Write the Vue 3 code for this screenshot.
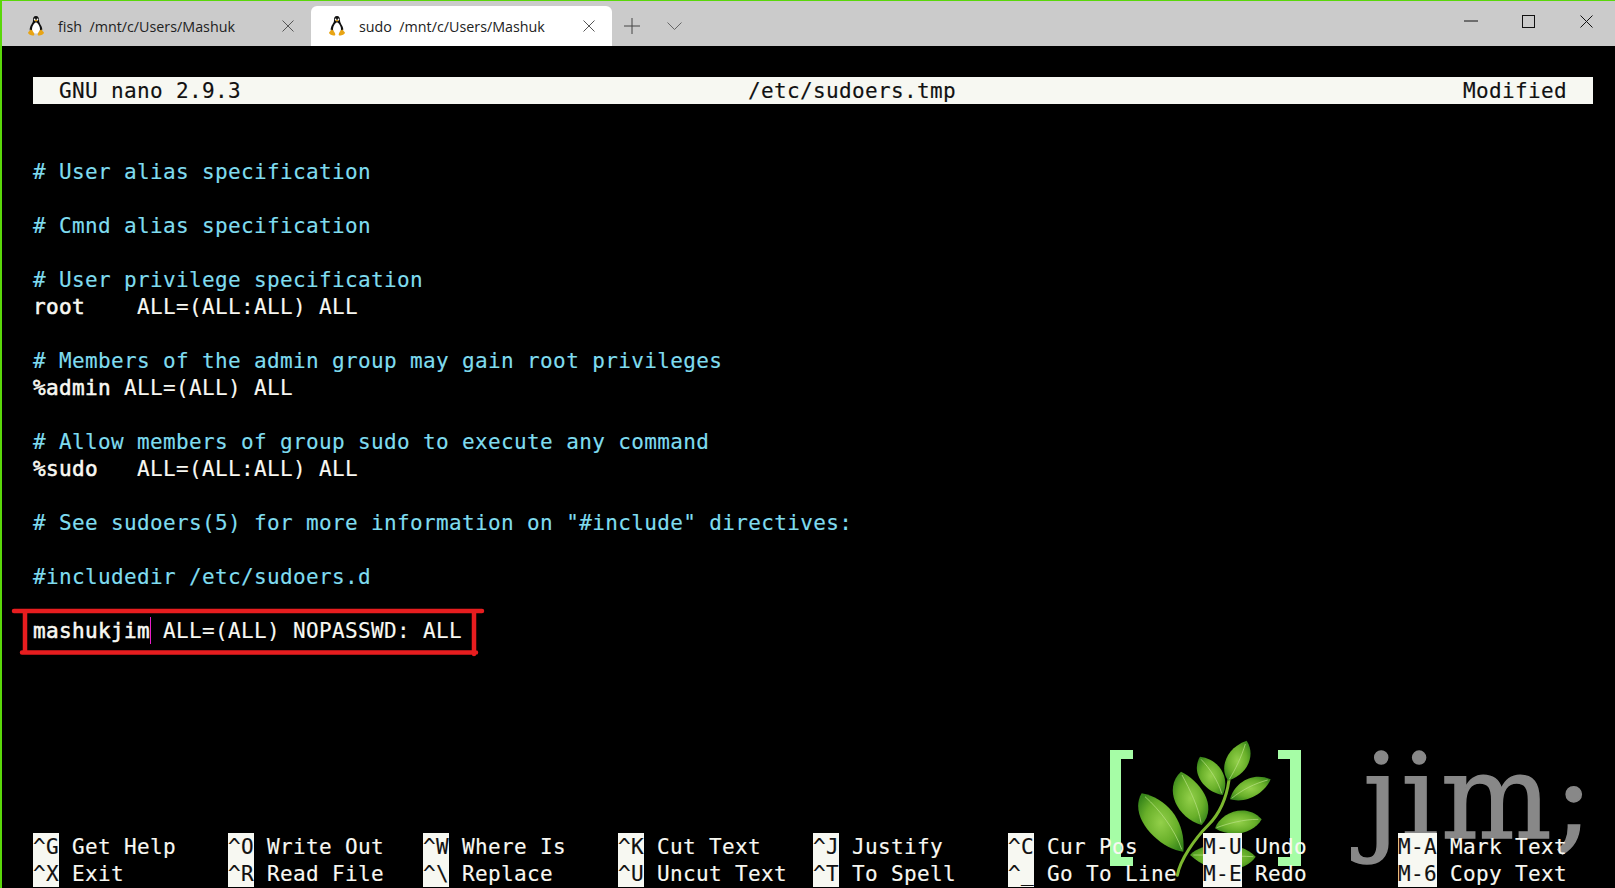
<script setup>
const tabs = [
  { title: 'fish  /mnt/c/Users/Mashuk', active: false },
  { title: 'sudo  /mnt/c/Users/Mashuk', active: true }
]
const lines = [
  { t: '' }, { t: '' },
  { t: '# User alias specification', c: true }, { t: '' },
  { t: '# Cmnd alias specification', c: true }, { t: '' },
  { t: '# User privilege specification', c: true },
  { t: 'root    ALL=(ALL:ALL) ALL', k: 'root' }, { t: '' },
  { t: '# Members of the admin group may gain root privileges', c: true },
  { t: '%admin ALL=(ALL) ALL', k: '%admin' }, { t: '' },
  { t: '# Allow members of group sudo to execute any command', c: true },
  { t: '%sudo   ALL=(ALL:ALL) ALL', k: '%sudo' }, { t: '' },
  { t: '# See sudoers(5) for more information on "#include" directives:', c: true }, { t: '' },
  { t: '#includedir /etc/sudoers.d', c: true }, { t: '' }
]
const shortcuts = [
  ['^G', 'Get Help'], ['^O', 'Write Out'], ['^W', 'Where Is'], ['^K', 'Cut Text'],
  ['^J', 'Justify'], ['^C', 'Cur Pos'], ['M-U', 'Undo'], ['M-A', 'Mark Text'],
  ['^X', 'Exit'], ['^R', 'Read File'], ['^\\', 'Replace'], ['^U', 'Uncut Text'],
  ['^T', 'To Spell'], ['^_', 'Go To Line'], ['M-E', 'Redo'], ['M-6', 'Copy Text']
]
const leaves = [
  'M125 190C205 205 258 277 250 365C180 358 82 262 125 190Z',
  'M243 125C295 150 358 225 305 285C232 265 188 175 243 125Z',
  'M300 80C352 85 394 140 368 195C316 188 270 130 300 80Z',
  'M440 32C468 75 444 132 385 152C358 120 374 55 440 32Z',
  'M512 148C494 190 440 222 390 208C402 160 456 124 512 148Z',
  'M485 268C462 310 395 326 345 295C362 246 440 218 485 268Z',
  'M270 375C305 335 420 330 467 380C440 425 340 440 270 375Z'
]
const ribs = [
  'M135 200C180 240 225 300 245 358',
  'M246 135C270 180 295 230 303 278',
  'M303 88C330 115 355 155 365 190',
  'M436 42C425 80 405 120 388 148',
  'M503 150C465 160 425 180 395 205',
  'M475 268C430 268 385 280 350 293',
  'M280 375C340 375 410 378 460 380'
]
</script>

<template>
  <div class="window">
    <header class="titlebar">
      <div
        v-for="tab in tabs"
        :key="tab.title"
        class="tab"
        :class="{ active: tab.active }"
      >
        <svg class="tux" viewBox="0 0 16 20">
          <path d="M8 0C5.6 0 4.8 2 5 4.4C5.1 6.4 3.6 7.6 2.6 9.8C1.8 11.6 1.4 13.6 2 15L14 15C14.6 13.4 14 11.4 13.2 9.8C12.2 7.8 11 6.4 11 4.2C11 2 10.2 0 8 0Z" fill="#111"/>
          <path d="M8 6.2C6 7 4 10 4 13.4C4 16 5.6 17.4 8 17.4C10.4 17.4 12 16 12 13.4C12 10 10 7 8 6.2Z" fill="#fff"/>
          <path d="M6.6 2.6a.8 1 0 1 0 .1 0ZM9.4 2.6a.8 1 0 1 0 .1 0Z" fill="#fff"/>
          <path d="M6.4 4.4L8 3.8L9.6 4.4L8 5.8Z" fill="#e8a414"/>
          <path d="M2.6 13.6C1.8 15 .4 15.8 0 16.8C.2 18.2 3 19.6 5 19.6C6.4 19.6 6.6 18.4 6 17.2C5.2 15.8 4 13.8 2.6 13.6Z" fill="#e8a414"/>
          <path d="M13.4 13.6C14.2 15 15.6 15.8 16 16.8C15.8 18.2 13 19.6 11 19.6C9.6 19.6 9.4 18.4 10 17.2C10.8 15.8 12 13.8 13.4 13.6Z" fill="#e8a414"/>
        </svg>
        <span class="tab-title">{{ tab.title }}</span>
        <svg class="tab-close" viewBox="0 0 12 12">
          <path d="M.5.5L11.5 11.5M11.5.5L.5 11.5" stroke="#555" fill="none"/>
        </svg>
      </div>
      <button class="tool plus">
        <svg width="16" height="16" viewBox="0 0 16 16"><path d="M8 0V16M0 8H16" stroke="#444" fill="none"/></svg>
      </button>
      <button class="tool chevron">
        <svg width="15" height="8" viewBox="0 0 15 8"><path d="M.5.5L7.5 7.5L14.5.5" stroke="#666" fill="none"/></svg>
      </button>
      <div class="controls">
        <button class="tool ctl">
          <svg width="14" height="2" viewBox="0 0 14 2"><path d="M0 1H14" stroke="#111" fill="none"/></svg>
        </button>
        <button class="tool ctl">
          <svg width="13" height="13" viewBox="0 0 13 13"><rect x=".5" y=".5" width="12" height="12" stroke="#111" fill="none"/></svg>
        </button>
        <button class="tool ctl">
          <svg width="13" height="13" viewBox="0 0 13 13"><path d="M.5.5L12.5 12.5M12.5.5L.5 12.5" stroke="#111" fill="none"/></svg>
        </button>
      </div>
    </header>

    <main class="terminal">
      <div class="watermark" aria-hidden="true">
        <div class="bracket left"></div>
        <svg class="sprig" viewBox="0 0 660 474">
          <defs>
            <radialGradient id="leafFill" cx="50%" cy="50%" r="60%">
              <stop offset="0" stop-color="#93d04a"/>
              <stop offset=".6" stop-color="#69b02a"/>
              <stop offset="1" stop-color="#37851a"/>
            </radialGradient>
          </defs>
          <path d="M232 436C240 390 285 325 325 285C360 250 380 200 387 150" stroke="#7cb82f" stroke-width="9" fill="none" stroke-linecap="round"/>
          <path v-for="d in leaves" :key="d" :d="d" fill="url(#leafFill)"/>
          <path v-for="d in ribs" :key="d" :d="d" stroke="#b9e184" stroke-width="3" fill="none" opacity=".7"/>
        </svg>
        <div class="bracket right"></div>
        <span class="jim">jim;</span>
      </div>

      <div class="row bar">
        <span>GNU nano 2.9.3</span>
        <span>/etc/sudoers.tmp</span>
        <span>Modified</span>
      </div>
      <template v-for="(line, i) in lines" :key="i">
        <div v-if="line.k" class="row"><span class="strong">{{ line.k }}</span>{{ line.t.slice(line.k.length) }}</div>
        <div v-else class="row" :class="{ comment: line.c }">{{ line.t }}</div>
      </template>

      <div class="row">
        <span class="strong">mashukjim</span><span class="cursor"></span> ALL=(ALL) NOPASSWD: ALL
        <svg class="marker" width="480" height="52" viewBox="0 0 480 52">
          <path d="M1 3H469M12 3V44M9 44.5H463M461 3V46" stroke="#e71d1f" stroke-width="4.5" stroke-linecap="round" fill="none"/>
        </svg>
      </div>

      <div class="shortcuts">
        <div v-for="s in shortcuts" :key="s[0]" class="shortcut">
          <span class="chip">{{ s[0] }}</span> {{ s[1] }}
        </div>
      </div>
    </main>
  </div>
</template>

<style scoped>
.window {
  width: 1615px;
  height: 888px;
  box-sizing: border-box;
  border-left: 2px solid #5ad70a;
  background: #000;
  display: flex;
  flex-direction: column;
  overflow: hidden;
}
.titlebar {
  height: 46px;
  box-sizing: border-box;
  flex: none;
  background: #cbcbcb;
  border-top: 1px solid #5ad70a;
  padding: 5px 0 0 8px;
  display: flex;
  align-items: stretch;
}
.tab {
  width: 301px;
  box-sizing: border-box;
  flex: none;
  display: flex;
  align-items: center;
  padding: 0 17px 0 18px;
  border-radius: 6px 6px 0 0;
  color: #222;
  font: 14.3px "Open Sans", sans-serif;
}
.tab.active {
  background: #fff;
}
.tux {
  width: 16px;
  height: 20px;
  flex: none;
  margin-right: 14px;
}
.tab-title {
  white-space: pre;
}
.tab-close {
  width: 12px;
  height: 12px;
  margin-left: auto;
  flex: none;
}
.tool {
  border: 0;
  padding: 0;
  background: none;
  display: flex;
  align-items: center;
  justify-content: center;
}
.plus {
  width: 40px;
  margin-top: -1px;
}
.chevron {
  width: 44px;
}
.controls {
  margin-left: auto;
  display: flex;
}
.ctl {
  width: 57.5px;
  height: 100%;
  margin-top: -5px;
}
.terminal {
  position: relative;
  flex: 1;
  padding: 31px 0 0 31px;
  display: flex;
  flex-direction: column;
  color: #f8f8f2;
  font: 21px "DejaVu Sans Mono", monospace;
  letter-spacing: 0.36px;
  line-height: 29px;
  white-space: pre;
  -webkit-text-stroke: 0.15px currentColor;
}
.row {
  position: relative;
  height: 27px;
  width: 1560px;
  flex: none;
}
.bar {
  display: flex;
  justify-content: space-between;
  box-sizing: border-box;
  padding: 0 26px;
  background: #f7f8f2;
  color: #111;
}
.comment {
  color: #7fdcef;
}
.strong {
  -webkit-text-stroke: 0.55px currentColor;
}
.cursor {
  display: inline-block;
  width: 0;
  height: 27px;
  vertical-align: top;
  border-left: 1px solid #e81ec8;
  margin-right: -1px;
}
.marker {
  position: absolute;
  left: -20px;
  top: -9px;
  overflow: visible;
}
.shortcuts {
  position: relative;
  margin-top: auto;
  margin-bottom: 1px;
  display: grid;
  grid-template-columns: repeat(8, 195px);
  grid-auto-rows: 27px;
}
.shortcut {
  height: 27px;
}
.chip {
  background: #f7f8f2;
  color: #111;
  display: inline-block;
  height: 27px;
}
.watermark {
  position: absolute;
  left: 1108px;
  top: 683px;
  width: 505px;
  height: 159px;
}
.bracket {
  position: absolute;
  top: 21px;
  width: 23px;
  height: 116px;
  box-sizing: border-box;
  border-top: 9px solid #a6fda6;
  border-bottom: 9px solid #a6fda6;
}
.bracket.left {
  left: 0;
  border-left: 11px solid #a6fda6;
}
.bracket.right {
  left: 168px;
  border-right: 11px solid #a6fda6;
}
.sprig {
  position: absolute;
  left: -10px;
  top: 1px;
  width: 220px;
  height: 158px;
  filter: blur(0.4px);
}
.jim {
  position: absolute;
  left: 253px;
  top: -16px;
  color: #888;
  font: 117px/170px "DejaVu Serif", serif;
  letter-spacing: 2px;
  -webkit-text-stroke: 1.5px #888;
}
</style>
